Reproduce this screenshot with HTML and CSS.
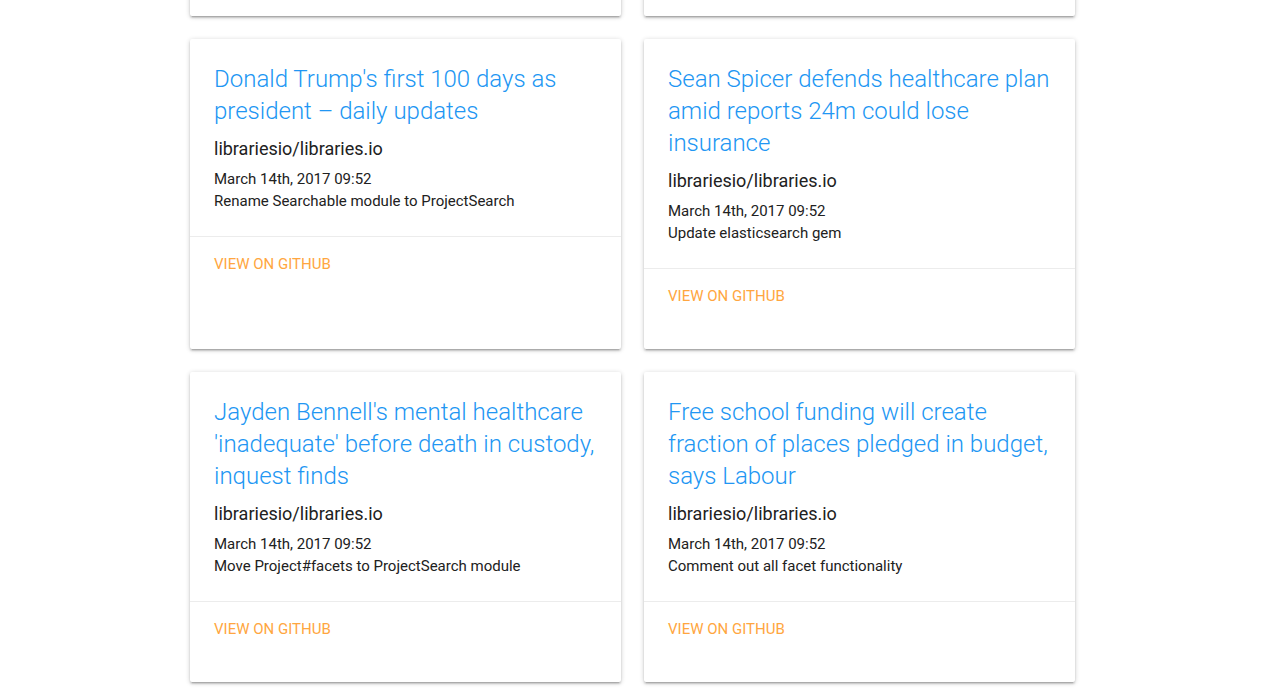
FILE: index.html
```html
<!DOCTYPE html>
<html>
<head>
<meta charset="utf-8">
<link rel="stylesheet" href="styles.css">
</head>
<body>
<main class="grid">
  <div class="card"></div>
  <div class="card"></div>

  <article class="card">
    <div class="card-content">
      <h2 class="card-title">Donald Trump's first 100 days as president – daily updates</h2>
      <p class="repo">librariesio/libraries.io</p>
      <p class="meta">March 14th, 2017 09:52</p>
      <p class="meta">Rename Searchable module to ProjectSearch</p>
    </div>
    <div class="card-action"><a class="action-link">View on GitHub</a></div>
  </article>

  <article class="card">
    <div class="card-content">
      <h2 class="card-title">Sean Spicer defends healthcare plan amid reports 24m could lose insurance</h2>
      <p class="repo">librariesio/libraries.io</p>
      <p class="meta">March 14th, 2017 09:52</p>
      <p class="meta">Update elasticsearch gem</p>
    </div>
    <div class="card-action"><a class="action-link">View on GitHub</a></div>
  </article>

  <article class="card">
    <div class="card-content">
      <h2 class="card-title">Jayden Bennell's mental healthcare 'inadequate' before death in custody, inquest finds</h2>
      <p class="repo">librariesio/libraries.io</p>
      <p class="meta">March 14th, 2017 09:52</p>
      <p class="meta">Move Project#facets to ProjectSearch module</p>
    </div>
    <div class="card-action"><a class="action-link">View on GitHub</a></div>
  </article>

  <article class="card">
    <div class="card-content">
      <h2 class="card-title">Free school funding will create fraction of places pledged in budget, says Labour</h2>
      <p class="repo">librariesio/libraries.io</p>
      <p class="meta">March 14th, 2017 09:52</p>
      <p class="meta">Comment out all facet functionality</p>
    </div>
    <div class="card-action"><a class="action-link">View on GitHub</a></div>
  </article>
</main>
</body>
</html>
```

FILE: styles.css
```css
html, body {
  margin: 0;
  padding: 0;
  background: #ffffff;
  font-family: Roboto, "Noto Sans", "Liberation Sans", sans-serif;
  color: rgba(0, 0, 0, 0.87);
  overflow: hidden;
}

.grid {
  display: grid;
  grid-template-columns: 431px 431px;
  column-gap: 23px;
  row-gap: 23px;
  grid-auto-rows: 310px;
  justify-content: center;
  margin-top: -294px;
  padding-bottom: 24px;
}

.card {
  display: flex;
  flex-direction: column;
  background: #fff;
  border-radius: 2px;
  box-shadow: 0 2px 2px 0 rgba(0, 0, 0, 0.14),
              0 3px 1px -2px rgba(0, 0, 0, 0.12),
              0 1px 5px 0 rgba(0, 0, 0, 0.2);
}

.card-content {
  padding: 24px 24px 24px 24px;
  border-bottom: 1px solid rgba(160, 160, 160, 0.2);
}

.card-title {
  margin: 0;
  font-size: 24px;
  line-height: 32px;
  font-weight: 300;
  color: #2196f3;
}

.repo {
  margin: 9px 0 6px;
  font-size: 18px;
  line-height: 26px;
  font-weight: 400;
  color: #212121;
}

.meta {
  margin: 0;
  font-size: 15px;
  line-height: 22px;
  color: #212121;
}

.card-action {
  flex: 1;
  padding: 17px 24px 43px;
}

.action-link {
  display: block;
  font-size: 15px;
  font-weight: 400;
  line-height: 20px;
  text-transform: uppercase;
  color: #ffa640;
}
```
